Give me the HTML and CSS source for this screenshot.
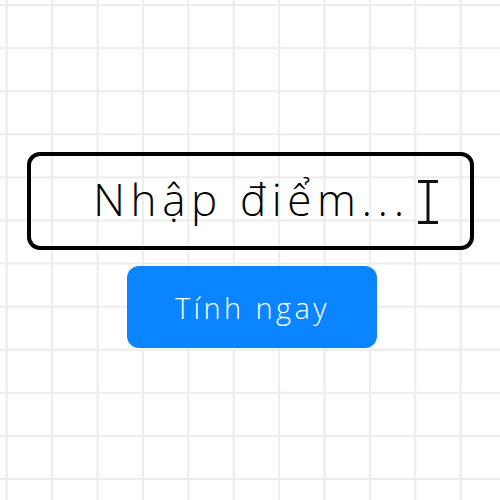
FILE: index.html
```html
<!DOCTYPE html>
<html lang="vi">
<head>
<meta charset="utf-8">
<link rel="stylesheet" href="styles.css">
</head>
<body>
<main class="page">
  <div class="field">
    <span class="placeholder">Nhập điểm...</span>
    <svg class="cursor" width="22" height="44" viewBox="0 0 22 44" aria-hidden="true">
      <path d="M1 1.5H21M11 1.5V42.5M1 42.5H21" stroke="#111" stroke-width="3" fill="none"/>
    </svg>
  </div>
  <button class="btn">Tính ngay</button>
</main>
</body>
</html>
```

FILE: styles.css
```css
html, body {
  margin: 0;
  padding: 0;
}
body {
  width: 500px;
  height: 500px;
  background-color: #fff;
  background-image:
    linear-gradient(to right, #ececec 0, #ececec 2px, transparent 2px),
    linear-gradient(to bottom, #ececec 0, #ececec 2px, transparent 2px);
  background-size: 45.4px 43.1px;
  background-position: 5.8px 4px;
  font-family: "Open Sans", "Noto Sans", sans-serif;
  overflow: hidden;
}
.page {
  display: flex;
  flex-direction: column;
  align-items: center;
  padding-top: 152px;
  gap: 16px;
}
.field {
  position: relative;
  box-sizing: border-box;
  width: 447px;
  height: 98px;
  margin-left: 1px;
  border: 4px solid #000;
  border-radius: 13px;
  display: flex;
  align-items: center;
  justify-content: center;
}
.placeholder {
  font-size: 44px;
  font-weight: 300;
  letter-spacing: 5.6px;
  color: #000;
  line-height: 1;
  margin-top: -4px;
  margin-left: 2px;
}
.cursor {
  position: absolute;
  left: 386px;
  top: 24px;
}
.btn {
  box-sizing: border-box;
  width: 250px;
  height: 82px;
  margin-left: 3px;
  border: none;
  border-radius: 12px;
  background: #0a84ff;
  color: #fff;
  font-family: "Open Sans", "Noto Sans", sans-serif;
  font-size: 29px;
  font-weight: 300;
  letter-spacing: 3.4px;
  padding: 0 0 0 2px;
}
```
